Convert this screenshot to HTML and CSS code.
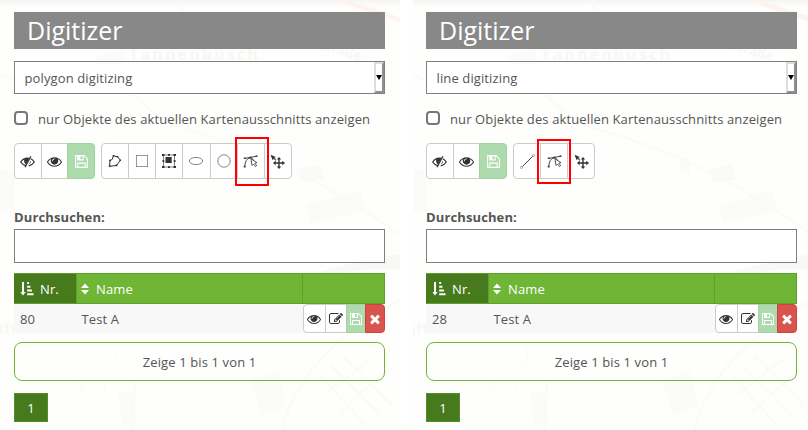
FILE: index.html
```html
<!DOCTYPE html>
<html lang="de">
<head>
<meta charset="utf-8">
<title>Digitizer</title>
<link rel="stylesheet" href="styles.css">
</head>
<body>
<svg class="defs" aria-hidden="true">
  <symbol id="eye" viewBox="0 0 1792 1792"><path d="M1664 960q-152-236-381-353 61 104 61 225 0 185-131.500 316.500t-316.500 131.500-316.500-131.500-131.500-316.500q0-121 61-225-229 117-381 353 133 205 333.500 326.500t434.500 121.500 434.500-121.500 333.500-326.500zM944 576q0-20-14-34t-34-14q-125 0-214.500 89.500t-89.500 214.500q0 20 14 34t34 14 34-14 14-34q0-86 61-147t147-61q20 0 34-14t14-34zM1792 960q0 34-20 69-140 230-376.500 368.500t-499.500 138.500-499.500-139-376.500-368q-20-35-20-69t20-69q140-229 376.500-368t499.500-139 499.500 139 376.500 368q20 35 20 69z"/></symbol>
  <symbol id="hide" viewBox="0 0 15 15"><path d="M6.200 11.900C3.600 11.300 1.800 9.700.700 8 2.300 5.600 4.600 4.100 7.500 4.100q1 0 1.800.2M10.800 4.800Q13 5.900 14.300 8 12.400 11 8.700 11.900" fill="none" stroke="currentColor" stroke-width="1.200"/><path d="M4.300 5.300Q6.500 3.400 9.300 4.500L6 10.500Q3.500 8.500 4.300 5.300z"/><path d="M10.900 2.400 5 13.300" stroke="currentColor" stroke-width="1.200"/><path d="M11.200 6.200Q11.300 9 8.800 10.300z"/></symbol>
  <symbol id="save" viewBox="0 0 1792 1792"><path d="M512 1536h768v-384h-768v384zM1408 1536h128v-896q0-14-10-38.500t-20-34.500l-281-281q-10-10-34-20t-39-10v416q0 40-28 68t-68 28h-576q-40 0-68-28t-28-68v-416h-128v1280h128v-416q0-40 28-68t68-28h832q40 0 68 28t28 68v416zM1024 608v-320q0-13-9.500-22.500t-22.500-9.500h-192q-13 0-22.500 9.500t-9.500 22.500v320q0 13 9.500 22.500t22.500 9.500h192q13 0 22.500-9.500t9.500-22.500zM1664 640v928q0 40-28 68t-68 28h-1344q-40 0-68-28t-28-68v-1344q0-40 28-68t68-28h928q40 0 88 20t76 48l280 280q28 28 48 76t20 88z"/></symbol>
  <symbol id="edit" viewBox="0 0 1792 1792"><path d="M888 1184l116-116-152-152-116 116v56h96v96h56zM1328 464q-16-16-33 1l-350 350q-17 17-1 33t33-1l350-350q17-17 1-33zM1408 1058v190q0 119-84.500 203.500t-203.500 84.500h-832q-119 0-203.500-84.500t-84.500-203.500v-832q0-119 84.500-203.500t203.500-84.500h832q63 0 117 25 15 7 18 23 3 17-9 29l-49 49q-14 14-32 8-23-6-45-6h-832q-66 0-113 47t-47 113v832q0 66 47 113t113 47h832q66 0 113-47t47-113v-126q0-13 9-22l64-64q15-15 35-7t20 29zM1312 320l288 288-672 672h-288v-288zM1756 452l-92 92-288-288 92-92q28-28 68-28t68 28l152 152q28 28 28 68t-28 68z"/></symbol>
  <symbol id="times" viewBox="0 0 1792 1792"><path d="M1490 1322q0 40-28 68l-136 136q-28 28-68 28t-68-28l-294-294-294 294q-28 28-68 28t-68-28l-136-136q-28-28-28-68t28-68l294-294-294-294q-28-28-28-68t28-68l136-136q28-28 68-28t68 28l294 294 294-294q28-28 68-28t68 28l136 136q28 28 28 68t-28 68l-294 294 294 294q28 28 28 68z"/></symbol>
  <symbol id="polygon" viewBox="0 0 14 14"><path d="M5.500 1.800 9.500 2.800 12.300 6.200 8.600 11.400 1.600 12.300 2 6.500 4.200 5.400z" fill="none" stroke="currentColor"/><path d="M4.700 1h1.600v1.600H4.700zM8.700 2h1.600v1.600H8.700zM11.500 5.400h1.600V7h-1.600zM7.800 10.600h1.600v1.600H7.800zM.8 11.500h1.600v1.600H.8zM1.200 5.700h1.600v1.600H1.200z"/></symbol>
  <symbol id="rect" viewBox="0 0 14 14"><path d="M1.500 1.500h11v11h-11z" fill="none" stroke="#999"/><path d="M1 1h1v1H1zM12 1h1v1h-1zM1 12h1v1H1zM12 12h1v1h-1z" fill="#777"/></symbol>
  <symbol id="donut" viewBox="0 0 14 14"><path d="M1.500 1h11v12h-11z" fill="none" stroke="#777" stroke-width=".9"/><path d="M3.500 3h6.200v6H3.500zM0 0h2.500v2H0zM6 0h2v1.700H6zM11.500 0H14v2h-2.500zM.5 6h1.800v2H.5zM11.700 6h1.800v2h-1.800zM0 12h2.500v2H0zM6 12.300h2V14H6zM11.500 12H14v2h-2.500z"/></symbol>
  <symbol id="ellipse" viewBox="0 0 14 14"><ellipse cx="7" cy="7" rx="6.600" ry="3.600" fill="none" stroke="currentColor" stroke-width=".6"/></symbol>
  <symbol id="circle" viewBox="0 0 14 14"><circle cx="7" cy="7" r="6.200" fill="none" stroke="currentColor" stroke-width=".6"/></symbol>
  <symbol id="line" viewBox="0 0 15 15"><path d="M2.200 12.800 12.800 2.200" stroke="currentColor" stroke-width=".9"/><g fill="#fff" stroke="#777" stroke-width=".6"><circle cx="1.500" cy="13.500" r="1"/><circle cx="13.500" cy="1.500" r="1"/></g></symbol>
  <symbol id="modify" viewBox="0 0 15 14"><path d="M1.700 12.200Q2.200 4 7.500 3.100 9.800 4 10.700 6M2 3.800 7.500 2.900 13.500 1.700" fill="none" stroke="currentColor" stroke-width=".9"/><path d="M.8 3.100h1.800v1.500H.8zM6.400 2.200h2.200v1.800H6.400zM12.600 1h1.800v1.500h-1.800zM.8 11.300h1.800v1.700H.8z"/><path d="M8 4.400 9 11l1.500-1.500 1.900 2.500 1.200-.9-1.600-2.400 2-.6z" fill="#fff" stroke="currentColor" stroke-width=".8"/></symbol>
  <symbol id="move" viewBox="0 0 15 15"><path d="M.5.800 5.800 3 4.300 3.900 6.300 6l-.8.800-2-2L2.600 6.200zM9 3l2.200 2.600H9.700v2.700h2.600V6.800L15 9l-2.700 2.200V9.700H9.700v2.700h1.500L9 15l-2.200-2.600h1.500V9.700H5.700v1.500L3 9l2.700-2.200v1.500h2.600V5.600H6.800z"/></symbol>
  <symbol id="sorted" viewBox="0 0 14 14"><path d="M2 0h2v10h1.600L3 13.500.3 10H2zM7.200 0h1.900v2H7.200zM7.200 3.700h3.200v2H7.200zM7.200 7.500h4.700v2H7.200zM7.200 11.200h6.300v2H7.200z"/></symbol>
  <symbol id="sort" viewBox="0 0 8 12"><path d="M4 .5 8 5H0zM0 7h8l-4 4.500z"/></symbol>
  <symbol id="map" viewBox="0 0 400 430">
    <g fill="#fbfcf9"><path d="M95 56l28-8 4 28-26 6zM305 205l55-14 6 20-55 12zM0 170h15v42H0zM250 380l28-8 8 34-24 10zM118 390l16 4 2 30h-14z"/><path d="M296 169l23-4 6 14-24 3zM268 160l9-3 1 15-9 1z" fill="#f9fbf8"/></g>
    <g fill="none" stroke="#fafaf8" stroke-width="2"><path d="M170 125Q290 155 400 235M120 80Q148 112 166 120M0 75Q60 100 118 90M282 430Q300 355 400 300M135 380Q134 410 132 430M180 0Q193 60 250 90M320 375l45 50M330 365l50 50M342 355l50 50M325 395l45-35M340 412l50-45"/><path d="M340 0l60 20" stroke="#fdf3f1" stroke-width="5"/><path d="M60 365h55V345M80 380h25v12H82z" stroke-width="1"/></g>
    <path d="M320 272Q360 260 400 254v16q-40-4-80 10z" fill="#f8f8f6"/>
    <g class="map-label"><text x="129" y="60">Tannenbusch</text><text class="map-street" x="319" y="49" transform="rotate(16 319 49)">straße</text><text class="map-town" x="-11" y="335" transform="rotate(-8 0 335)">Alfter</text></g>
  </symbol>
</svg>
<main class="page">
  <section class="panel">
    <svg class="map" aria-hidden="true"><use href="#map"/></svg>
    <h1 class="title">Digitizer</h1>
    <div class="select"><span>polygon digitizing</span><i class="select-button"></i></div>
    <label class="check"><input type="checkbox"><span>nur Objekte des aktuellen Kartenausschnitts anzeigen</span></label>
    <div class="toolbar">
      <div class="group general">
        <button class="btn"><svg class="i15"><use href="#hide"/></svg></button>
        <button class="btn"><svg class="i15"><use href="#eye"/></svg></button>
        <button class="btn save"><svg class="i15"><use href="#save"/></svg></button>
      </div>
      <div class="group">
        <button class="btn"><svg><use href="#polygon"/></svg></button>
        <button class="btn"><svg><use href="#rect"/></svg></button>
        <button class="btn"><svg><use href="#donut"/></svg></button>
        <button class="btn"><svg><use href="#ellipse"/></svg></button>
        <button class="btn"><svg><use href="#circle"/></svg></button>
        <button class="btn"><svg class="i15"><use href="#modify"/></svg><span class="marker tall"></span></button>
        <button class="btn"><svg class="i15"><use href="#move"/></svg></button>
      </div>
    </div>
    <div class="search-label">Durchsuchen:</div>
    <input class="search" type="text">
    <div class="thead">
      <div class="th active"><svg class="sorted"><use href="#sorted"/></svg>Nr.</div>
      <div class="th"><svg class="sort"><use href="#sort"/></svg>Name</div>
      <div class="th"></div>
    </div>
    <div class="row">
      <span class="cell">80</span><span class="cell">Test A</span>
      <div class="actions">
        <button class="btn"><svg><use href="#eye"/></svg></button>
        <button class="btn"><svg><use href="#edit"/></svg></button>
        <button class="btn save"><svg><use href="#save"/></svg></button>
        <button class="btn delete"><svg><use href="#times"/></svg></button>
      </div>
    </div>
    <div class="info">Zeige 1 bis 1 von 1</div>
    <button class="current">1</button>
  </section>
  <section class="panel second">
    <svg class="map" aria-hidden="true"><use href="#map"/></svg>
    <h1 class="title">Digitizer</h1>
    <div class="select"><span>line digitizing</span><i class="select-button"></i></div>
    <label class="check"><input type="checkbox"><span>nur Objekte des aktuellen Kartenausschnitts anzeigen</span></label>
    <div class="toolbar">
      <div class="group general">
        <button class="btn"><svg class="i15"><use href="#hide"/></svg></button>
        <button class="btn"><svg class="i15"><use href="#eye"/></svg></button>
        <button class="btn save"><svg class="i15"><use href="#save"/></svg></button>
      </div>
      <div class="group">
        <button class="btn"><svg class="i15"><use href="#line"/></svg></button>
        <button class="btn"><svg class="i15"><use href="#modify"/></svg><span class="marker"></span></button>
        <button class="btn"><svg class="i15"><use href="#move"/></svg></button>
      </div>
    </div>
    <div class="search-label">Durchsuchen:</div>
    <input class="search" type="text">
    <div class="thead">
      <div class="th active"><svg class="sorted"><use href="#sorted"/></svg>Nr.</div>
      <div class="th"><svg class="sort"><use href="#sort"/></svg>Name</div>
      <div class="th"></div>
    </div>
    <div class="row">
      <span class="cell">28</span><span class="cell">Test A</span>
      <div class="actions">
        <button class="btn"><svg><use href="#eye"/></svg></button>
        <button class="btn"><svg><use href="#edit"/></svg></button>
        <button class="btn save"><svg><use href="#save"/></svg></button>
        <button class="btn delete"><svg><use href="#times"/></svg></button>
      </div>
    </div>
    <div class="info">Zeige 1 bis 1 von 1</div>
    <button class="current">1</button>
  </section>
</main>
</body>
</html>
```
FILE: styles.css
```css
* { box-sizing: border-box; }
body {
  margin: 0;
  background: #fff;
  color: #555;
  font: 13px/20px "Open Sans", "Noto Sans", sans-serif;
  letter-spacing: .12px;
  overflow: hidden;
}
button, input { font: inherit; margin: 0; padding: 0; }
svg { fill: currentColor; }
.defs { display: none; }
.page { display: flex; gap: 13px; height: 430px; }
.panel {
  position: relative;
  isolation: isolate;
  display: flex;
  flex-direction: column;
  align-items: flex-start;
  flex: 0 0 400px;
  height: 430px;
  padding: 12px 15px 0 14px;
  overflow: hidden;
  background: linear-gradient(#f4f4f4, #fefefc 6px);
}
.second { flex-basis: 395px; padding: 12px 11px 0 13px; }
.map { position: absolute; z-index: -1; left: 0; top: 0; width: 400px; height: 430px; }
.second .map { left: -1px; }
.map-label { fill: #f7f7f6; font: bold 16px "Open Sans", sans-serif; letter-spacing: 2.150px; }
.map-street { font-size: 13px; letter-spacing: 0; }
.map-town { font-size: 14px; letter-spacing: 1px; }
.title {
  width: 371px;
  height: 37px;
  margin: 0 0 12px;
  padding-left: 13px;
  background: #888;
  color: #fff;
  font-size: 25px;
  font-weight: 400;
  letter-spacing: 0;
  line-height: 37px;
}
.select {
  display: flex;
  justify-content: space-between;
  width: 371px;
  height: 33px;
  padding-left: 9.500px;
  border: 1px solid #808080;
  background: #fff;
  line-height: 33px;
}
.select-button {
  display: grid;
  place-items: center;
  width: 10px;
  border: 2px solid;
  border-color: #ddd #909090 #909090 #ddd;
}
.select-button::after {
  content: "";
  border: 3px solid transparent;
  border-top: 5px solid #000;
  border-bottom: 0;
}
.check { display: flex; align-items: center; gap: 10px; height: 20px; margin: 15px 0 14px; white-space: nowrap; }
.check input {
  appearance: none;
  width: 14px;
  height: 14px;
  margin-top: -2px;
  border: 2px solid #777;
  border-radius: 4px;
  background: #fff;
}
.toolbar { display: flex; gap: 6px; height: 36px; }
.group, .actions { display: flex; }
.btn {
  position: relative;
  display: grid;
  place-items: center;
  width: 28.150px;
  height: 36px;
  margin-right: -1px;
  border: 1px solid #ccc;
  background: #fff;
  color: #333;
}
.general .btn { width: 27.670px; }
.btn:first-child { border-radius: 4px 0 0 4px; }
.btn:last-child { border-radius: 0 4px 4px 0; margin-right: 0; }
.btn svg { width: 14px; height: 14px; }
.btn .i15 { width: 15px; height: 15px; }
.btn.save { background: #aedbae; border-color: #9fd39f; color: #fff; }
.btn.delete { background: #d9534f; border-color: #d43f3a; color: #fff; }
.marker {
  position: absolute;
  z-index: 2;
  left: -4px;
  top: -5px;
  width: 34px;
  height: 45px;
  border: 2px solid #f00;
}
.marker.tall { left: -3px; top: -7px; height: 49px; }
.search-label { height: 20px; margin: 28px 0 2px; font-weight: 700; }
.search { width: 371px; height: 34px; border: 1px solid #808080; background: #fff; }
.thead {
  display: grid;
  grid-template-columns: 63px 226px 82px;
  width: 371px;
  height: 31px;
  margin-top: 10px;
  border: 1px solid #5fa02c;
  border-width: 1px 0;
  background: #6fb536;
  color: #fff;
}
.th { display: flex; align-items: center; padding-left: 4px; border-right: 1px solid #5fa02c; }
.th.active { padding-left: 6px; background: #47791d; }
.sorted { width: 14px; height: 14px; margin-right: 6px; }
.sort { width: 8px; height: 12px; margin-right: 7px; }
.row {
  display: grid;
  grid-template-columns: 61.500px 227.500px 82px;
  width: 371px;
  height: 29px;
  background: #f8f8f8;
  line-height: 30px;
}
.cell { padding-left: 6px; }
.actions .btn { height: 29px; width: 22.500px; }
.actions .btn.save { width: 20px; }
.actions .btn.delete { width: 20px; }
.info {
  width: 371px;
  height: 39px;
  margin: 9px 0 12px;
  border: 1px solid #6fb536;
  border-radius: 8px;
  line-height: 38px;
  text-align: center;
}
.current { width: 34px; height: 29px; border: 1px solid #568c2b; background: #47791d; color: #fff; }
```
